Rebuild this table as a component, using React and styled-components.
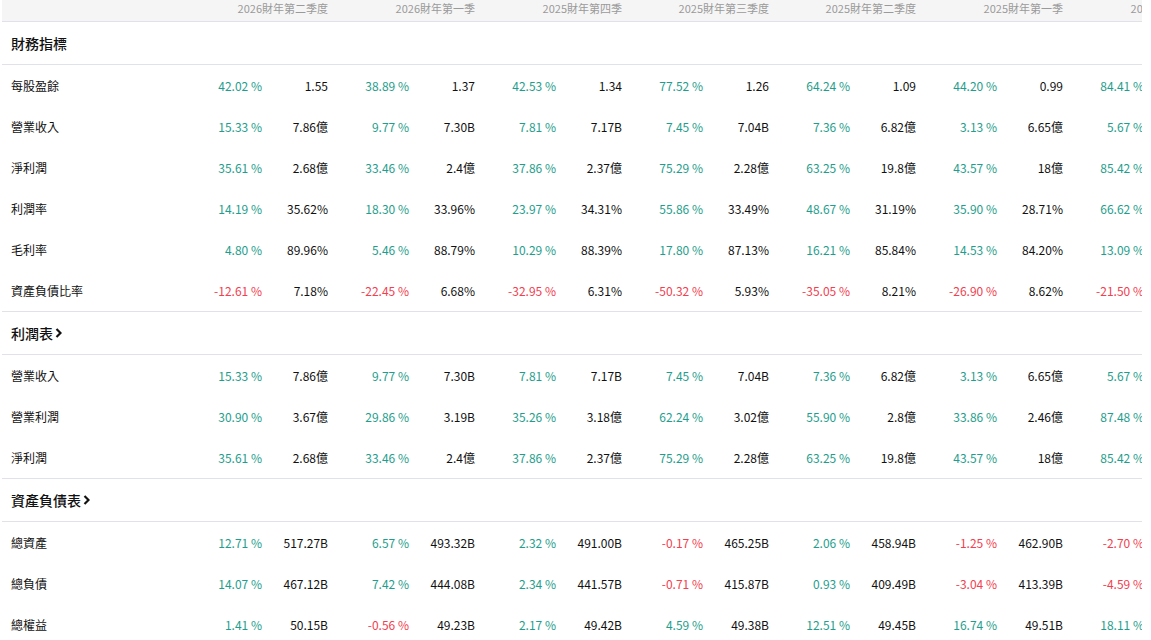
import React from 'react';
import styled, { createGlobalStyle } from 'styled-components';

const GlobalStyle = createGlobalStyle`
  html, body {
    margin: 0;
    padding: 0;
    background: #fff;
  }
  body {
    font-family: "Noto Sans CJK TC", "Noto Sans", sans-serif;
    color: #111;
  }
`;

const COLS = '179px repeat(7, 81px 66px)';

const color = {
  up: '#1e9e8c',
  down: '#f2404f',
  text: '#111111',
  head: '#9a9a9a',
  headBg: '#f5f5f5',
  line: '#e1e1e8',
};

const Wrapper = styled.div`
  margin-left: 2px;
  width: 1140px;
  overflow: hidden;
`;

const Table = styled.div`
  width: max-content;
`;

const HeaderRow = styled.div`
  display: grid;
  grid-template-columns: 179px repeat(7, 147px);
  height: 21px;
  background: ${color.headBg};
  border-bottom: 1px solid ${color.line};
`;

const HeadCell = styled.div`
  font-size: 11px;
  line-height: 16px;
  color: ${color.head};
  text-align: right;
  white-space: nowrap;
`;

const SectionRow = styled.div`
  display: flex;
  align-items: center;
  gap: 2px;
  box-sizing: border-box;
  height: 43px;
  padding: 0 0 1px 9px;
  border-bottom: 1px solid ${color.line};
  font-size: 14px;
  font-weight: 500;
  color: ${color.text};
`;

const DataRow = styled.div`
  display: grid;
  grid-template-columns: ${COLS};
  align-items: center;
  box-sizing: border-box;
  height: 41px;
  padding-bottom: 1px;
  font-size: 12px;
  white-space: nowrap;

  &:last-child {
    height: 42px;
    border-bottom: 1px solid ${color.line};
  }
`;

const Label = styled.div`
  padding-left: 9px;
  color: ${color.text};
`;

const Pct = styled.div`
  text-align: right;
  color: ${(p) => (p.$neg ? color.down : color.up)};
`;

const Value = styled.div`
  text-align: right;
  color: ${color.text};
`;

const Chevron = () => (
  <svg width="7" height="10" viewBox="0 0 7 10">
    <polyline points="1.5,1 5.5,5 1.5,9" fill="none" stroke="#111" strokeWidth="2.2" />
  </svg>
);

const headers = [
  '2026財年第二季度',
  '2026財年第一季',
  '2025財年第四季',
  '2025財年第三季度',
  '2025財年第二季度',
  '2025財年第一季',
  '2024財年第四季',
];

const revenue = ['營業收入', [[15.33, '7.86億'], [9.77, '7.30B'], [7.81, '7.17B'], [7.45, '7.04B'], [7.36, '6.82億'], [3.13, '6.65億'], [5.67, '6.45億']]];
const netProfit = ['淨利潤', [[35.61, '2.68億'], [33.46, '2.4億'], [37.86, '2.37億'], [75.29, '2.28億'], [63.25, '19.8億'], [43.57, '18億'], [85.42, '1.53億']]];

const sections = [
  {
    title: '財務指標',
    link: false,
    rows: [
      ['每股盈餘', [[42.02, '1.55'], [38.89, '1.37'], [42.53, '1.34'], [77.52, '1.26'], [64.24, '1.09'], [44.2, '0.99'], [84.41, '0.94']]],
      revenue,
      netProfit,
      ['利潤率', [[14.19, '35.62%'], [18.3, '33.96%'], [23.97, '34.31%'], [55.86, '33.49%'], [48.67, '31.19%'], [35.9, '28.71%'], [66.62, '27.10%']]],
      ['毛利率', [[4.8, '89.96%'], [5.46, '88.79%'], [10.29, '88.39%'], [17.8, '87.13%'], [16.21, '85.84%'], [14.53, '84.20%'], [13.09, '85.66%']]],
      ['資產負債比率', [[-12.61, '7.18%'], [-22.45, '6.68%'], [-32.95, '6.31%'], [-50.32, '5.93%'], [-35.05, '8.21%'], [-26.9, '8.62%'], [-21.5, '9.13%']]],
    ],
  },
  {
    title: '利潤表',
    link: true,
    rows: [
      revenue,
      ['營業利潤', [[30.9, '3.67億'], [29.86, '3.19B'], [35.26, '3.18億'], [62.24, '3.02億'], [55.9, '2.8億'], [33.86, '2.46億'], [87.48, '2.36億']]],
      netProfit,
    ],
  },
  {
    title: '資產負債表',
    link: true,
    rows: [
      ['總資產', [[12.71, '517.27B'], [6.57, '493.32B'], [2.32, '491.00B'], [-0.17, '465.25B'], [2.06, '458.94B'], [-1.25, '462.90B'], [-2.7, '466.00B']]],
      ['總負債', [[14.07, '467.12B'], [7.42, '444.08B'], [2.34, '441.57B'], [-0.71, '415.87B'], [0.93, '409.49B'], [-3.04, '413.39B'], [-4.59, '418.50B']]],
      ['總權益', [[1.41, '50.15B'], [-0.56, '49.23B'], [2.17, '49.42B'], [4.59, '49.38B'], [12.51, '49.45B'], [16.74, '49.51B'], [18.11, '43.95B']]],
    ],
  },
];

const fmt = (n) => `${n.toFixed(2)} %`;

export default function App() {
  return (
    <Wrapper>
      <GlobalStyle />
      <Table>
        <HeaderRow>
          <div />
          {headers.map((h) => (
            <HeadCell key={h}>{h}</HeadCell>
          ))}
        </HeaderRow>
        {sections.map((s) => (
          <div key={s.title}>
            <SectionRow>
              {s.title}
              {s.link && <Chevron />}
            </SectionRow>
            <div>
              {s.rows.map(([label, cells]) => (
                <DataRow key={label}>
                  <Label>{label}</Label>
                  {cells.map(([pct, val], i) => (
                    <React.Fragment key={i}>
                      <Pct $neg={pct < 0}>{fmt(pct)}</Pct>
                      <Value>{val}</Value>
                    </React.Fragment>
                  ))}
                </DataRow>
              ))}
            </div>
          </div>
        ))}
      </Table>
    </Wrapper>
  );
}
